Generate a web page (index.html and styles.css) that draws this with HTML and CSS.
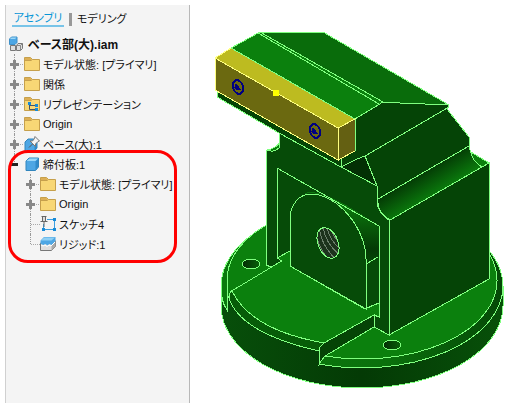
FILE: index.html
```html
<!DOCTYPE html>
<html lang="ja">
<head>
  <meta charset="UTF-8">
  <title>ベース部(大).iam</title>
  <meta name="viewport" content="width=device-width, initial-scale=1.0">
  <link rel="stylesheet" href="styles.css">
</head>
<body>

<!-- アイコン定義 -->
<svg class="defs" width="0" height="0" aria-hidden="true">
  <symbol id="folder" viewBox="0 0 16 16">
    <path d="M.5 14.500V1.500h6l2 2h7v11z" fill="#f8d775" stroke="#c6a04c"/>
    <path d="M1 4.500h6l1.500-1" fill="none" stroke="#c6a04c"/>
    <path d="M1 2h5.500l1 1.500L7 4H1z" fill="#dcae55"/>
  </symbol>
  <symbol id="rep" viewBox="0 0 16 16">
    <use href="#folder"/>
    <path d="M5.500 8v5.500H11M5.500 9.500H11" fill="none" stroke="#456"/>
    <path d="M4 6h3v3H4zM11 8h3v3h-3zM11 12h3v3h-3z" fill="#168ad8"/>
  </symbol>
  <symbol id="cube" viewBox="0 0 16 16">
    <path d="M2 5l3-3h9.500v9l-3 3.500H2z" fill="#4da6e4" stroke="#3185bd" stroke-linejoin="round"/>
    <path d="M2.500 5l3-2.500H14L11.500 5z" fill="#9ad7f8"/>
    <path d="M11.500 5.500L14 3v8l-2.500 3z" fill="#2f8aca"/>
  </symbol>
  <symbol id="pinned" viewBox="0 0 16 16">
    <path d="M1 6l3-3h9v9l-3 3.500H1z" fill="#4da6e4" stroke="#3185bd" stroke-linejoin="round"/>
    <path d="M10.500 7L13 4v8l-2.500 3z" fill="#2f8aca"/>
    <path d="M11 .5l4.500 4.500-1.500.5-2.500 2.500V10.500L6 5h2.500L10.500 2.500z" fill="#f4f4f4" stroke="#777"/>
    <path d="M8.500 8L5 11.500" stroke="#555"/>
  </symbol>
  <symbol id="asm" viewBox="0 0 16 16">
    <path d="M2.500 9.500h5v5h-5zM8.500 9.500l1.500-2h4.500v5l-2 2h-4z" fill="#dedede" stroke="#777"/>
    <path d="M8.500 9.500h4v5m0-5l2-2" fill="none" stroke="#888"/>
    <path d="M1.500 3l2-2h5.500v5.500l-2 2H1.500z" fill="#4da6e4" stroke="#3f90c8"/>
    <path d="M2 3l1.500-1.500h5L7 3z" fill="#9ad7f8"/>
  </symbol>
  <symbol id="sketch" viewBox="0 0 16 16">
    <path d="M7 3.500h7.500v10h-11V8" fill="none" stroke="#3b9fe0"/>
    <path d="M13 2h3v3h-3zM13 12h3v3h-3zM2 12h3v3H2z" fill="#168ad8"/>
    <path d="M1.500.5h5M2.500 1v4M5.500 1v4M.5 5.500h7M4 6v5" fill="none" stroke="#666"/>
    <path d="M3 1h2v4H3z" fill="#ddd"/>
  </symbol>
  <symbol id="rigid" viewBox="0 0 16 16">
    <path d="M.5 7v7.500h11l4-4V5z" fill="#ddd" stroke="#777"/>
    <path d="M11.500 8l4-4v6.500l-4 4z" fill="#aaa"/>
    <path d="M.5 4.500L4 1h11.500v4l-4 4-2-1-2 1.500-2-1.500-2 1-3-1z" fill="#4da6e4"/>
    <path d="M1 4.500L4 1.500h11l-3.500 3z" fill="#8fd0f4"/>
    <path d="M1 9l2 1 2-1 2 1.500L9 9l2 1 4-4" fill="none" stroke="#fff"/>
  </symbol>
</svg>

<aside class="browser">
  <div class="tabs">
    <button class="tab active">アセンブリ</button>
    <button class="tab">モデリング</button>
  </div>

  <div class="title"><svg class="icon"><use href="#asm"/></svg>ベース部(大).iam</div>

  <ul class="tree">
    <li><div class="row"><button class="toggle" aria-label="展開"></button><svg class="icon"><use href="#folder"/></svg>モデル状態: [プライマリ]</div></li>
    <li><div class="row"><button class="toggle" aria-label="展開"></button><svg class="icon"><use href="#folder"/></svg>関係</div></li>
    <li><div class="row"><button class="toggle" aria-label="展開"></button><svg class="icon"><use href="#rep"/></svg>リプレゼンテーション</div></li>
    <li><div class="row"><button class="toggle" aria-label="展開"></button><svg class="icon"><use href="#folder"/></svg>Origin</div></li>
    <li><div class="row"><button class="toggle" aria-label="展開"></button><svg class="icon"><use href="#pinned"/></svg>ベース(大):1</div></li>
    <li class="marked">
      <div class="row"><button class="toggle open" aria-label="折りたたむ"></button><svg class="icon"><use href="#cube"/></svg>締付板:1</div>
      <ul class="tree">
        <li><div class="row"><button class="toggle" aria-label="展開"></button><svg class="icon"><use href="#folder"/></svg>モデル状態: [プライマリ]</div></li>
        <li><div class="row"><button class="toggle" aria-label="展開"></button><svg class="icon"><use href="#folder"/></svg>Origin</div></li>
        <li><div class="row"><span class="branch"></span><svg class="icon"><use href="#sketch"/></svg>スケッチ4</div></li>
        <li><div class="row"><span class="branch"></span><svg class="icon"><use href="#rigid"/></svg>リジッド:1</div></li>
      </ul>
    </li>
  </ul>
</aside>

<main class="view">
  <svg class="model" viewBox="190 5 327 398" role="img" aria-label="ベース部">
    <defs>
      <linearGradient id="side">
        <stop offset="0" stop-color="#074f0a"/>
        <stop offset=".5" stop-color="#043a05"/>
        <stop offset="1" stop-color="#075009"/>
      </linearGradient>
      <linearGradient id="rim">
        <stop offset="0" stop-color="#0b7a0d"/>
        <stop offset=".6" stop-color="#0a700c"/>
        <stop offset="1" stop-color="#054807"/>
      </linearGradient>
      <linearGradient id="groove" gradientUnits="userSpaceOnUse" x1="424" y1="172" x2="438" y2="195">
        <stop offset="0" stop-color="#043c05"/>
        <stop offset="1" stop-color="#0b7e0d"/>
      </linearGradient>
      <linearGradient id="pocket" gradientUnits="userSpaceOnUse" x1="0" y1="205" x2="0" y2="260">
        <stop offset="0" stop-color="#0b780d"/>
        <stop offset=".8" stop-color="#043a05"/>
        <stop offset="1" stop-color="#054506"/>
      </linearGradient>
      <linearGradient id="hole">
        <stop offset="0" stop-color="#032c04"/>
        <stop offset="1" stop-color="#086009"/>
      </linearGradient>
      <clipPath id="bore"><ellipse cx="328" cy="243" rx="10" ry="16" transform="rotate(-22 328 243)"/></clipPath>
    </defs>

    <!-- 円盤 -->
    <g class="edge">
      <path d="M221 286V306A141 82 0 0 0 503 306V286z" fill="url(#side)"/>
      <path d="M227 310Q221 302 221 286A141 82 0 0 1 503 286A141 82 0 0 1 319 364L319 351Q244 333 229 298L227 294z" fill="url(#rim)"/>
      <path d="M227 310V280A135 78 0 0 1 497 280A135 78 0 0 1 325 356L319 349Q244 333 229 298L227 294" class="top"/>
      <path d="M232 291L229 294V298Q240 333 319 351V348L324 343Q251 330 232 291z" class="lip"/>
      <path d="M230 292L275 265M232 291Q251 330 324 343" fill="none"/>
      <path d="M319 364V348L324 343 374 315V327L325 356z" class="dark"/>
      <ellipse cx="251" cy="264" rx="9" ry="5" fill="url(#hole)"/>
      <ellipse cx="392" cy="345" rx="9" ry="5" fill="url(#hole)"/>
    </g>

    <!-- 本体 -->
    <g class="edge">
      <path d="M266 150H271L279 146V133L341 167 377 186V203Q379 214 389 220V335L374 327V315L379 317V226L277 168V258L282 261 271 267 266 265z" class="front"/>
      <path d="M267 150Q277 148 279 143V148Q275 152 271 151z" class="top"/>
      <path d="M377 199Q378 213 390 220L489 163V279L389 335V220" class="dark"/>
      <path d="M378 199L469 146 471 153 482 167 390 220Q377 213 378 199z" fill="url(#groove)"/>
      <path d="M471 152L489 163 482 167Q472 161 471 152z" class="top"/>
      <path d="M277 168L379 226V303L365 309 290 266V251L277 258z" class="front"/>
      <path d="M304 194Q318 184 379 226V257L366 264Q362 230 341 206 325 190 304 194z" fill="url(#pocket)" stroke="none"/>
      <path d="M277 168L379 226V317M366 264L378 257M365 309L378 303" fill="none"/>
      <path d="M290 266V219C290 205 299 194 311 194C338 194 366 229 366 259V309z" class="front"/>
      <path d="M374 315L379 317" fill="none"/>
    </g>

    <!-- ねじ穴 -->
    <g clip-path="url(#bore)">
      <path d="M310 220h35v45h-35z" fill="#1c331c"/>
      <path d="M315 226Q317 250 334 265M319 226Q321 247 338 261M323 226Q325 244 341 256M327 227Q329 241 343 251M331 229Q333 238 343 246" class="thread"/>
    </g>
    <ellipse cx="328" cy="243" rx="10" ry="16" transform="rotate(-22 328 243)" class="edge" fill="none"/>

    <!-- あご -->
    <g class="edge">
      <path d="M355 119L383 102 449 105 447 109 469 137V146L378 199 377 186 341 167V160z" class="dark"/>
      <path d="M341 167L357 159 365 156 377 186z" class="shadow"/>
      <path d="M341 167L357 159 365 156 449 107" fill="none"/>
      <path d="M217 90V97L279 133 341 167V158z" class="dark"/>
      <path d="M231 48L260 32 263 32 383 102 355 119z" class="top"/>
      <path d="M260 32H323L449 105 400 103 383 102z" class="slope"/>
      <path d="M258 33L379 104" fill="none"/>
    </g>

    <!-- 締付板 -->
    <g class="plate">
      <path d="M215 58L231 48 355 119 338 128z" fill="#bdbb20"/>
      <path d="M215 58L338 128V160L215 90z" fill="#6b6910"/>
      <path d="M338 128L355 119V151L338 160z" fill="#646012"/>
    </g>
    <path d="M231 48L355 119V151" class="edge" fill="none"/>
    <g class="screw">
      <ellipse cx="238" cy="87" rx="5" ry="7" transform="rotate(-20 238 87)"/>
      <ellipse cx="315" cy="131" rx="5" ry="7" transform="rotate(-20 315 131)"/>
      <path d="M236 83l-2 5 2 2h5l-2-3zM313 127l-2 5 2 2h5l-2-3z"/>
    </g>
    <path d="M273 90h6v6h-6z" fill="#ff0"/>
  </svg>
</main>

</body>
</html>
```

FILE: styles.css
```css
* {
  box-sizing: border-box;
}

body {
  display: flex;
  min-height: 100vh;
  margin: 0;
  padding: 5px 0 0 5px;
  background: #fff;
  color: #111;
  font-family: "Liberation Sans", "Noto Sans CJK JP", sans-serif;
  font-size: 11px;
  font-feature-settings: "palt";
}

.defs {
  position: absolute;
}

button {
  padding: 0;
  border: none;
  background: none;
  color: inherit;
  font: inherit;
  font-feature-settings: inherit;
  cursor: pointer;
}

/* モデルブラウザ */
.browser {
  flex: 0 0 185px;
  border-left: 1px solid #d0d0d0;
  border-right: 1px solid #b8b8b8;
  background: #f4f4f4;
  white-space: nowrap;
}

.tabs {
  display: flex;
  align-items: center;
  height: 28px;
  padding-left: 6px;
}

.tab {
  height: 16px;
  line-height: 14px;
}

.tab.active {
  width: 52px;
  border-bottom: 2px solid #78c4e8;
  color: #0696d7;
}

.tab + .tab {
  margin-left: 5px;
  padding-left: 5px;
  border-left: 3px solid #999;
  height: 13px;
  line-height: 13px;
}

.title {
  display: flex;
  align-items: center;
  gap: 4px;
  height: 21px;
  padding-left: 2px;
  font-size: 12px;
  font-weight: bold;
}

.icon {
  flex: none;
  width: 16px;
  height: 16px;
}

.tree {
  margin: 0;
  padding: 0 0 0 3px;
  list-style: none;
}

.tree .tree {
  padding-left: 16px;
}

.tree > li {
  position: relative;
}

/* 点線 */
.tree > li::before {
  content: "";
  position: absolute;
  top: 0;
  bottom: 0;
  left: 5px;
  border-left: 1px dotted #999;
}

.tree > li:last-child::before {
  bottom: auto;
  height: 10px;
}

.row {
  display: flex;
  align-items: center;
  height: 20px;
}

.row .icon {
  margin-right: 3px;
}

.toggle,
.branch {
  position: relative;
  flex: none;
  width: 15px;
  height: 9px;
}

.toggle {
  background:
    linear-gradient(#888, #888) 1px 3px / 9px 3px no-repeat,
    linear-gradient(#888, #888) 4px 0 / 3px 9px no-repeat,
    repeating-linear-gradient(90deg, #aaa 0 1px, transparent 1px 2px) 11px 4px / 4px 1px no-repeat;
}

.toggle.open {
  background: linear-gradient(#222, #222) 1px 3px / 8px 3px no-repeat;
}

.branch {
  background: repeating-linear-gradient(90deg, #aaa 0 1px, transparent 1px 2px) 6px 4px / 9px 1px no-repeat;
}

/* 赤枠 */
.marked::after {
  content: "";
  position: absolute;
  inset: -4px 12px -9px -1px;
  border: 3px solid #f00;
  border-radius: 20px;
  pointer-events: none;
}

/* 3Dビュー */
.view {
  flex: 1;
  min-width: 0;
}

.model {
  display: block;
  width: 100%;
  height: auto;
  shape-rendering: crispEdges;
}

.edge {
  stroke: #80ff80;
}

.top {
  fill: #0b800d;
}

.slope {
  fill: #096c0b;
}

.lip {
  fill: #075c08;
}

.front {
  fill: #064b08;
}

.dark {
  fill: #054406;
}

.shadow {
  fill: #033004;
}

.thread {
  fill: none;
  stroke: #6b806b;
}

.plate {
  stroke: #ffff80;
}

.screw ellipse {
  fill: none;
  stroke: #000080;
  stroke-width: 2;
}

.screw path {
  fill: #000080;
}
```
